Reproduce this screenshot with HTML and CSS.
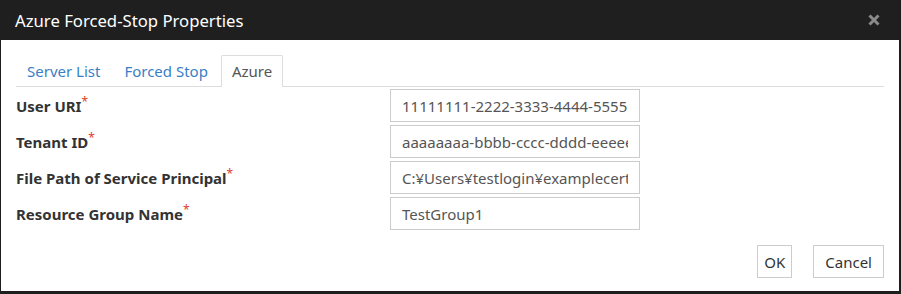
FILE: index.html
```html
<!DOCTYPE html>
<html lang="en">
<head>
    <meta charset="UTF-8">
    <title>Azure Forced-Stop Properties</title>
    <link rel="stylesheet" href="styles.css">
</head>
<body>
    <div class="dialog">
        <div class="dialog-header">
            <h1>Azure Forced-Stop Properties</h1>
            <svg class="close" width="12" height="12" viewBox="0 0 12 12">
                <path d="M1.5 1.5 L10.5 10.5 M10.5 1.5 L1.5 10.5" stroke="#8a8a8a" stroke-width="3" stroke-linecap="butt"/>
            </svg>
        </div>
        <div class="dialog-body">
            <ul class="tabs">
                <li><a href="#">Server List</a></li>
                <li><a href="#">Forced Stop</a></li>
                <li class="active"><a href="#">Azure</a></li>
            </ul>
            <div class="form">
                <div class="form-row">
                    <label>User URI<sup>*</sup></label>
                    <input type="text" value="11111111-2222-3333-4444-555555555555">
                </div>
                <div class="form-row">
                    <label>Tenant ID<sup>*</sup></label>
                    <input type="text" value="aaaaaaaa-bbbb-cccc-dddd-eeeeeeeeeeee">
                </div>
                <div class="form-row">
                    <label>File Path of Service Principal<sup>*</sup></label>
                    <input type="text" value="C:¥Users¥testlogin¥examplecert.pem">
                </div>
                <div class="form-row">
                    <label>Resource Group Name<sup>*</sup></label>
                    <input type="text" value="TestGroup1">
                </div>
            </div>
            <div class="buttons">
                <button class="btn-ok">OK</button>
                <button class="btn-cancel">Cancel</button>
            </div>
        </div>
    </div>
</body>
</html>
```

FILE: styles.css
```css
body {
    margin: 0;
    padding: 0;
    background: #fff;
    font-family: "Noto Sans", "Open Sans", sans-serif;
    color: #333;
}
.dialog {
    width: 901px;
    height: 294px;
    box-sizing: border-box;
    border-left: 1px solid #1e1e1e;
    border-right: 2px solid #1e1e1e;
    border-bottom: 3px solid #1e1e1e;
    background: #fff;
}
.dialog-header {
    height: 40px;
    background: #1f1f1f;
    display: flex;
    align-items: center;
    justify-content: space-between;
    padding: 0 19px 0 14px;
}
.dialog-header h1 {
    margin: 0;
    font-size: 16.7px;
    font-weight: normal;
    color: #fff;
}
.close {
    display: block;
}
.dialog-body {
    padding: 15px 15px 0;
}
.tabs {
    list-style: none;
    margin: 0;
    padding: 0;
    display: flex;
    border-bottom: 1px solid #ddd;
    height: 31px;
}
.tabs li {
    margin-right: 2px;
}
.tabs a {
    display: block;
    height: 31px;
    line-height: 30px;
    padding: 0 10px;
    font-size: 15px;
    color: #3a7fc4;
    text-decoration: none;
    border: 1px solid transparent;
    border-bottom: none;
    box-sizing: border-box;
    border-radius: 2px 2px 0 0;
}
.tabs li.active a {
    color: #555;
    border-color: #ddd;
    height: 32px;
    background: #fff;
}
.form {
    padding-top: 2px;
}
.form-row {
    display: flex;
    align-items: center;
    margin-bottom: 3px;
}
.form-row label {
    width: 374px;
    font-size: 15px;
    font-weight: bold;
    color: #333;
}
.form-row label sup {
    color: #e0411f;
    font-size: 12px;
    font-weight: normal;
    line-height: 0;
}
.form-row input {
    width: 250px;
    height: 33px;
    box-sizing: border-box;
    border: 1px solid #ccc;
    padding: 0 11px;
    font-family: "Noto Sans", "Open Sans", sans-serif;
    font-size: 15px;
    color: #555;
    outline: none;
}
.buttons {
    display: flex;
    justify-content: flex-end;
    gap: 21px;
    margin-top: 15px;
}
.buttons button {
    height: 33px;
    background: #fff;
    border: 1px solid #ccc;
    font-family: "Noto Sans", "Open Sans", sans-serif;
    font-size: 15px;
    color: #333;
    padding: 0 11px;
}
.buttons .btn-ok {
    padding: 0 6px;
}
```
